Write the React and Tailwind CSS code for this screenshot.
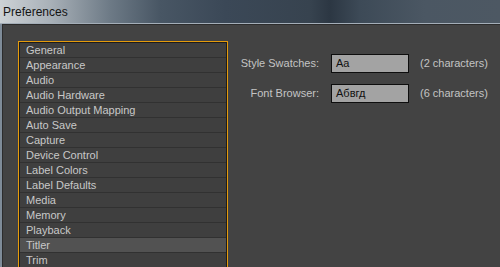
import React from "react";

const items = [
  "General",
  "Appearance",
  "Audio",
  "Audio Hardware",
  "Audio Output Mapping",
  "Auto Save",
  "Capture",
  "Device Control",
  "Label Colors",
  "Label Defaults",
  "Media",
  "Memory",
  "Playback",
  "Titler",
  "Trim",
];

function Field({ label, value, note }) {
  return (
    <div className="flex items-center h-[19px]">
      <div className="w-[90px] text-right text-[11px] text-[#c4c4c4]">{label}</div>
      <div className="ml-[12px] w-[78px] h-[19px] bg-[#a3a3a3] border border-[#0e0e0e] pl-[4px] text-[11px] leading-[17px] text-[#111]">
        {value}
      </div>
      <div className="ml-[11px] text-[11px] text-[#c4c4c4]">{note}</div>
    </div>
  );
}

export default function App() {
  return (
    <div className="w-[500px] h-[267px] overflow-hidden bg-[#434343] font-['Liberation_Sans',Arial,sans-serif]">
      <div className="h-[23px] flex items-center pl-[3px] text-[12px] text-[#141414] bg-[linear-gradient(90deg,#cdd2d6_0%,#a9b1b8_10%,#6d7a86_22%,#485664_32%,#3b4857_45%,#37434f_62%,#2c3743_66%,#3d4a57_72%,#4b5763_85%,#4d5863_100%)]">
        Preferences
      </div>
      <div className="h-px bg-[#a4aeb8]" />
      <div className="flex h-[243px]">
        <div className="w-[2px] bg-[#7f8c99]" />
        <div className="flex-1 flex border-l border-t border-[#2c2c2c]">
          <div className="ml-[15px] mt-[16px] w-[210px] border border-[#e59b0b] self-start">
            <div className="border border-[#1c1c1c] bg-[#3f3f3f]">
              {items.map((it) => (
                <div
                  key={it}
                  className={
                    "h-[15px] border-b border-[#313131] pl-[6px] text-[11px] leading-[14px] text-[#c8c8c8] " +
                    (it === "Titler" ? "bg-[#525252]" : "")
                  }
                >
                  {it}
                </div>
              ))}
            </div>
          </div>
          <div className="flex flex-col gap-[11px] mt-[29px] ml-px">
            <Field label="Style Swatches:" value="Aa" note="(2 characters)" />
            <Field label="Font Browser:" value="Абвгд" note="(6 characters)" />
          </div>
        </div>
      </div>
    </div>
  );
}
